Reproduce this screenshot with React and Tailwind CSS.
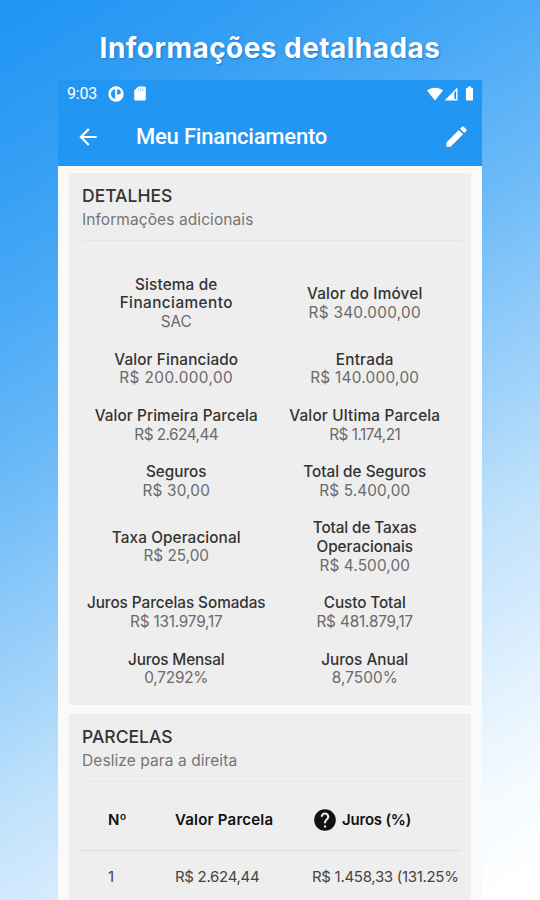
import { MdArrowBack, MdBatteryFull, MdEdit, MdHelp } from "react-icons/md";

const details = [
  [
    {
      label: [
        { text: "Sistema de", track: "tracking-[0.17px]" },
        { text: "Financiamento", track: "tracking-[0.45px]" },
      ],
      value: { text: "SAC" },
    },
    {
      label: [{ text: "Valor do Imóvel", track: "tracking-[0.2px]" }],
      value: { text: "R$ 340.000,00", track: "tracking-[0.3px]" },
    },
  ],
  [
    {
      label: [{ text: "Valor Financiado", track: "tracking-[0.13px]" }],
      value: { text: "R$ 200.000,00", track: "tracking-[0.45px]" },
    },
    {
      label: [{ text: "Entrada", track: "tracking-[0.25px]" }],
      value: { text: "R$ 140.000,00", track: "tracking-[0.3px]" },
    },
  ],
  [
    {
      label: [{ text: "Valor Primeira Parcela", track: "tracking-[0.1px]" }],
      value: { text: "R$ 2.624,44", track: "tracking-[-0.5px]" },
    },
    {
      label: [{ text: "Valor Ultima Parcela", track: "tracking-[0.2px]" }],
      value: { text: "R$ 1.174,21", track: "tracking-[-0.5px]" },
    },
  ],
  [
    {
      label: [{ text: "Seguros" }],
      value: { text: "R$ 30,00", track: "tracking-[0.2px]" },
    },
    {
      label: [{ text: "Total de Seguros" }],
      value: { text: "R$ 5.400,00", track: "tracking-[0.15px]" },
    },
  ],
  [
    {
      label: [{ text: "Taxa Operacional", track: "tracking-[0.1px]" }],
      value: { text: "R$ 25,00" },
    },
    {
      label: [{ text: "Total de Taxas", track: "tracking-[-0.1px]" }, { text: "Operacionais" }],
      value: { text: "R$ 4.500,00", track: "tracking-[0.15px]" },
    },
  ],
  [
    {
      label: [{ text: "Juros Parcelas Somadas", track: "tracking-[-0.05px]" }],
      value: { text: "R$ 131.979,17", track: "tracking-[-0.2px]" },
    },
    {
      label: [{ text: "Custo Total", track: "tracking-[-0.1px]" }],
      value: { text: "R$ 481.879,17", track: "tracking-[-0.15px]" },
    },
  ],
  [
    {
      label: [{ text: "Juros Mensal", track: "tracking-[-0.15px]" }],
      value: { text: "0,7292%", track: "tracking-[-0.2px]" },
    },
    {
      label: [{ text: "Juros Anual" }],
      value: { text: "8,7500%", track: "tracking-[0.1px]" },
    },
  ],
];

function StatusBar() {
  return (
    <div className="flex h-[27px] items-center pr-1 pl-[9px]">
      <span className="w-[41px] text-base leading-none tracking-[-0.2px]">9:03</span>
      <svg className="size-4" viewBox="0 0 16 16">
        <circle cx="8" cy="8" r="7.7" fill="#fff" />
        <path d="M7.200 13V3.300C4.600 3.700 3 5.600 3 8s1.600 4.400 4.200 5Z" fill="#2196f3" />
        <path d="M9 3.500h1.300a2.400 2.400 0 0 1 0 5H9Z" fill="#2196f3" />
      </svg>
      <svg className="ml-[10px] h-[15px] w-3" viewBox="0 0 12 15">
        <path d="M4.300.5H10.500A1.300 1.300 0 0 1 11.800 1.800V13.200a1.300 1.300 0 0 1-1.300 1.300h-9A1.300 1.300 0 0 1 .2 13.200V4.600Z" fill="#fff" />
        <path d="M4.500 2.500v2.500M6.700 2.500v2.500M8.900 2.500v2.500" stroke="#2196f3" strokeWidth=".7" opacity=".6" />
      </svg>
      <div className="ml-auto flex items-center">
        <svg className="h-[14px] w-4" viewBox="0 0 16 14">
          <path d="M8 13.500 0 3.400C4.600-.3 11.400-.3 16 3.400Z" fill="#fff" />
        </svg>
        <svg className="ml-px h-[14px] w-[14px]" viewBox="0 0 14 14">
          <path d="M13.500.5V13.500H.5Z" fill="#fff" />
          <path d="M10.200 5.500V12h1.900V3.800Z" fill="#2196f3" />
        </svg>
        <MdBatteryFull className="ml-[3px] size-[17px]" />
      </div>
    </div>
  );
}

function AppBar() {
  return (
    <div className="flex h-[59px] items-center pr-3 pl-[17px]">
      <MdArrowBack className="size-[26px]" />
      <h2 className="ml-[35px] text-[22px] leading-none font-medium tracking-[-0.2px]">Meu Financiamento</h2>
      <MdEdit className="ml-auto size-[27px]" />
    </div>
  );
}

function CardHeader({ title, subtitle }) {
  return (
    <div className="mr-2 ml-[13px] h-[68px] border-b border-[#e6e6e6] pt-[11px]">
      <h3 className="text-[17.500px] leading-[24px] font-medium text-[#333]">{title}</h3>
      <p className="text-[15.500px] leading-[24px] tracking-[0.08px] text-[#757575]">{subtitle}</p>
    </div>
  );
}

function Detail({ label, value }) {
  return (
    <div className="text-center text-[15.300px] leading-[18.750px] whitespace-nowrap">
      {label.map((line) => (
        <p key={line.text} className={`font-medium text-[#333] ${line.track ?? ""}`}>
          {line.text}
        </p>
      ))}
      <p className={`text-[#6a6a6a] ${value.track ?? ""}`}>{value.text}</p>
    </div>
  );
}

export default function App() {
  return (
    <div className="flex h-[900px] w-[540px] flex-col items-center overflow-hidden bg-[linear-gradient(149deg,#2196f3_2%,#339ef4_14%,#48a9f6_25%,#6ab9f7_39%,#86c6f9_48%,#a4d4fa_58%,#bee1fb_66%,#cfe8fd_73%,#e5f3fe_82%,#f5fbff_90%,#ffffff_98%)]">
      <h1 className="h-20 shrink-0 pt-[30px] font-['Inter'] text-[28px] leading-[36px] font-bold tracking-[0.450px] text-white [text-shadow:1px_1px_2px_#1f78c8]">
        Informações detalhadas
      </h1>
      <div className="flex w-[424px] flex-1 flex-col bg-[#fafafa]">
        <header className="h-[86px] shrink-0 bg-[#2196f3] font-['Roboto'] text-white">
          <StatusBar />
          <AppBar />
        </header>
        <main className="flex flex-1 flex-col gap-[9px] px-[11px] pt-[7px] font-['Inter']">
          <section className="h-[532px] shrink-0 bg-[#eee]">
            <CardHeader title="DETALHES" subtitle="Informações adicionais" />
            <div className="mr-3 ml-[13px] flex flex-col gap-[18.750px] pt-[34.500px]">
              {details.map((row) => (
                <div key={row[0].label[0].text} className="grid grid-cols-2 items-center">
                  {row.map((item) => (
                    <Detail key={item.label[0].text} {...item} />
                  ))}
                </div>
              ))}
            </div>
          </section>
          <section className="flex flex-1 flex-col bg-[#eee]">
            <CardHeader title="PARCELAS" subtitle="Deslize para a direita" />
            <div className="mr-[10px] ml-[10px] overflow-hidden text-[15px] whitespace-nowrap">
              <div className="flex h-[69px] items-center border-b border-[#ddd] pt-2 pl-[29px] font-semibold text-[#111]">
                <span className="w-[67px]">Nº</span>
                <span className="w-[137px] tracking-[0.22px]">Valor Parcela</span>
                <MdHelp className="mr-[4px] size-[26px]" />
                <span className="tracking-[-0.2px]">Juros (%)</span>
              </div>
              <div className="flex h-[53px] items-center pl-[29px] text-[#444]">
                <span className="w-[67px]">1</span>
                <span className="w-[137px] tracking-[-0.3px]">R$ 2.624,44</span>
                <span className="tracking-[-0.3px]">R$ 1.458,33 (131.25%</span>
              </div>
            </div>
          </section>
        </main>
      </div>
    </div>
  );
}
